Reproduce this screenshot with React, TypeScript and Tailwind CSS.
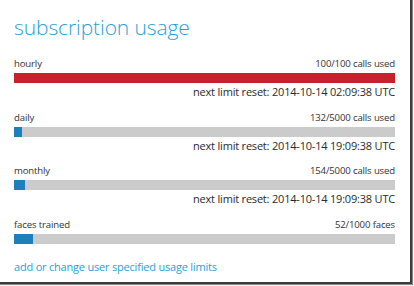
import React from 'react';

const font = { fontFamily: '"Open Sans", "Noto Sans", Arial, sans-serif' };

type Usage = {
  id: string;
  label: string;
  used: string;
  pct: number;
  color: string;
  reset?: string;
};

const usages: Usage[] = [
  { id: 'hourly', label: 'hourly', used: '100/100 calls used', pct: 100, color: 'bg-[#c9202b]', reset: '2014-10-14 02:09:38 UTC' },
  { id: 'daily', label: 'daily', used: '132/5000 calls used', pct: 2.2, color: 'bg-[#1f7fba]', reset: '2014-10-14 19:09:38 UTC' },
  { id: 'monthly', label: 'monthly', used: '154/5000 calls used', pct: 3.0, color: 'bg-[#1f7fba]', reset: '2014-10-14 19:09:38 UTC' },
  { id: 'faces', label: 'faces trained', used: '52/1000 faces', pct: 5.1, color: 'bg-[#1f7fba]' },
];

export default function App() {
  return (
    <div className="w-[414px] h-[286px] bg-[#f4f4f4] overflow-hidden" style={font}>
      <div className="w-[413px] h-[285px] bg-[#8a8a8a]">
        <div className="w-[412px] h-[284px] bg-[#3c3c3c]">
          <div className="w-[410px] h-[282px] bg-white pl-[14px] pr-[15px]">
            <h1 className="pt-[12px] text-[21px] leading-[30px] font-light text-[#2a9fd8] tracking-[-0.1px]">
              subscription usage
            </h1>

            <div className="mt-[16px]">
              {usages.map((u) => (
                <div key={u.id} className={u.reset ? 'mb-[12.5px]' : ''}>
                  <div className="flex justify-between text-[9.6px] leading-[12px] tracking-[-0.15px] text-[#333]">
                    <span>{u.label}</span>
                    <span>{u.used}</span>
                  </div>
                  <div className="mt-[3px] h-[10px] bg-[#cbcbcb]">
                    <div className={`h-full ${u.color}`} style={{ width: `${u.pct}%` }} />
                  </div>
                  {u.reset && (
                    <div className="mt-[2px] text-right text-[11px] leading-[14px] tracking-[-0.2px] text-[#2a2a2a]">
                      next limit reset: {u.reset}
                    </div>
                  )}
                </div>
              ))}
            </div>

            <a href="#" className="block mt-[16px] text-[11px] leading-[14px] tracking-[-0.2px] text-[#2a9fd8]">
              add or change user specified usage limits
            </a>
          </div>
        </div>
      </div>
    </div>
  );
}
